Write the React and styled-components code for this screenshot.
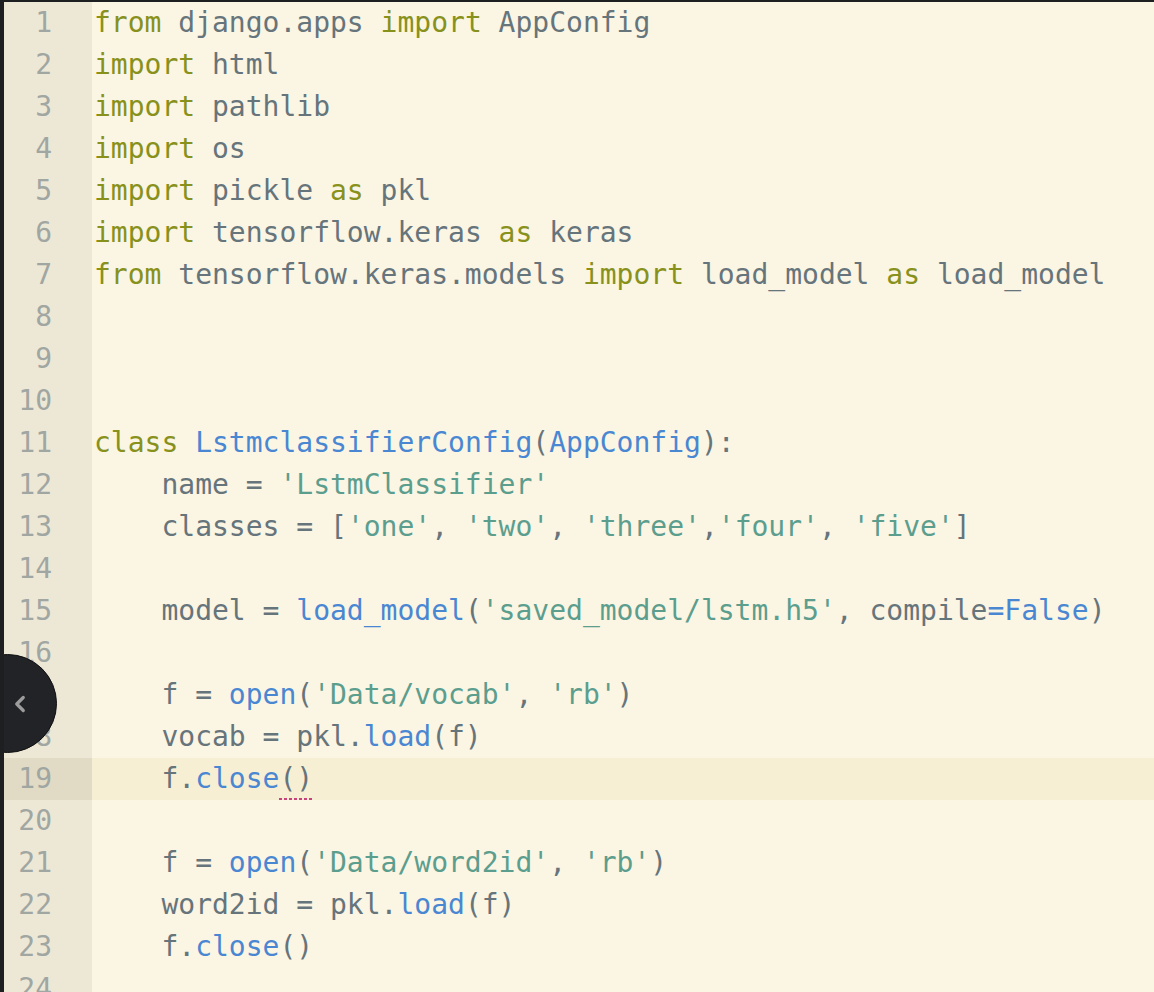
import styled, { createGlobalStyle } from "styled-components";
import { ChevronLeft } from "lucide-react";

const GlobalStyle = createGlobalStyle`
  html, body {
    margin: 0;
    padding: 0;
    background: #fbf5e4;
    overflow: hidden;
  }
`;

// Editor frame
const Frame = styled.div`
  position: relative;
  height: 100vh;
  border-top: 2px solid #1e1f21;
  border-left: 4px solid #1e1f21;
  background: #fbf5e4;
  font-family: "DejaVu Sans Mono", "Liberation Mono", monospace;
  font-size: 28px;
  line-height: 42px;
  overflow: hidden;
`;

const Line = styled.div`
  display: flex;
  height: 42px;
  background: ${(p) => (p.$active ? "#f7efd3" : "transparent")};
`;

const Gutter = styled.div`
  flex: 0 0 88px;
  box-sizing: border-box;
  padding-right: 40px;
  text-align: right;
  color: #a0a6a2;
  background: ${(p) => (p.$active ? "#e1dbc5" : "#ede8d6")};
`;

const Code = styled.div`
  padding-left: 2px;
  white-space: pre;
  color: #66747b;
`;

const colors = {
  k: "#87911b",
  t: "#66747b",
  f: "#4a87d2",
  s: "#5c9e8e",
};

const Tok = styled.span`
  color: ${(p) => colors[p.$type]};
`;

// spell-check dots under the call parens
const Squiggle = styled.span`
  position: relative;
  display: inline-block;
  height: 42px;
  vertical-align: top;
  &::after {
    content: "";
    position: absolute;
    left: 0;
    right: 0;
    bottom: 0;
    height: 2px;
    background: repeating-linear-gradient(90deg, #c8437b 0 3px, transparent 3px 5px);
  }
`;

const Toggle = styled.button`
  position: absolute;
  z-index: 2;
  left: -46px;
  top: 652px;
  width: 99px;
  height: 99px;
  border-radius: 50%;
  border: 1px solid #0f0f10;
  background: #222326;
  color: #9c9c9c;
  display: flex;
  align-items: center;
  justify-content: flex-end;
  padding: 0 23px 0 0;
  box-sizing: border-box;
  cursor: pointer;
`;

const lines = [
  [["k", "from"], ["t", " django.apps "], ["k", "import"], ["t", " AppConfig"]],
  [["k", "import"], ["t", " html"]],
  [["k", "import"], ["t", " pathlib"]],
  [["k", "import"], ["t", " os"]],
  [["k", "import"], ["t", " pickle "], ["k", "as"], ["t", " pkl"]],
  [["k", "import"], ["t", " tensorflow.keras "], ["k", "as"], ["t", " keras"]],
  [["k", "from"], ["t", " tensorflow.keras.models "], ["k", "import"], ["t", " load_model "], ["k", "as"], ["t", " load_model"]],
  [],
  [],
  [],
  [["k", "class"], ["t", " "], ["f", "LstmclassifierConfig"], ["t", "("], ["f", "AppConfig"], ["t", "):"]],
  [["t", "    name = "], ["s", "'LstmClassifier'"]],
  [["t", "    classes = ["], ["s", "'one'"], ["t", ", "], ["s", "'two'"], ["t", ", "], ["s", "'three'"], ["t", ","], ["s", "'four'"], ["t", ", "], ["s", "'five'"], ["t", "]"]],
  [],
  [["t", "    model = "], ["f", "load_model"], ["t", "("], ["s", "'saved_model/lstm.h5'"], ["t", ", compile"], ["f", "=False"], ["t", ")"]],
  [],
  [["t", "    f = "], ["f", "open"], ["t", "("], ["s", "'Data/vocab'"], ["t", ", "], ["s", "'rb'"], ["t", ")"]],
  [["t", "    vocab = pkl."], ["f", "load"], ["t", "(f)"]],
  [["t", "    f."], ["f", "close"], ["q", "()"]],
  [],
  [["t", "    f = "], ["f", "open"], ["t", "("], ["s", "'Data/word2id'"], ["t", ", "], ["s", "'rb'"], ["t", ")"]],
  [["t", "    word2id = pkl."], ["f", "load"], ["t", "(f)"]],
  [["t", "    f."], ["f", "close"], ["t", "()"]],
  [],
];

export default function App() {
  return (
    <>
      <GlobalStyle />
      <Frame>
        {lines.map((toks, i) => {
          const active = i === 18;
          return (
            <Line key={i} $active={active}>
              <Gutter $active={active}>{i + 1}</Gutter>
              <Code>
                {toks.map(([type, text], j) =>
                  type === "q" ? (
                    <Squiggle key={j}>{text}</Squiggle>
                  ) : (
                    <Tok key={j} $type={type}>
                      {text}
                    </Tok>
                  )
                )}
              </Code>
            </Line>
          );
        })}
        <Toggle aria-label="Collapse">
          <ChevronLeft size={26} strokeWidth={3} />
        </Toggle>
      </Frame>
    </>
  );
}
